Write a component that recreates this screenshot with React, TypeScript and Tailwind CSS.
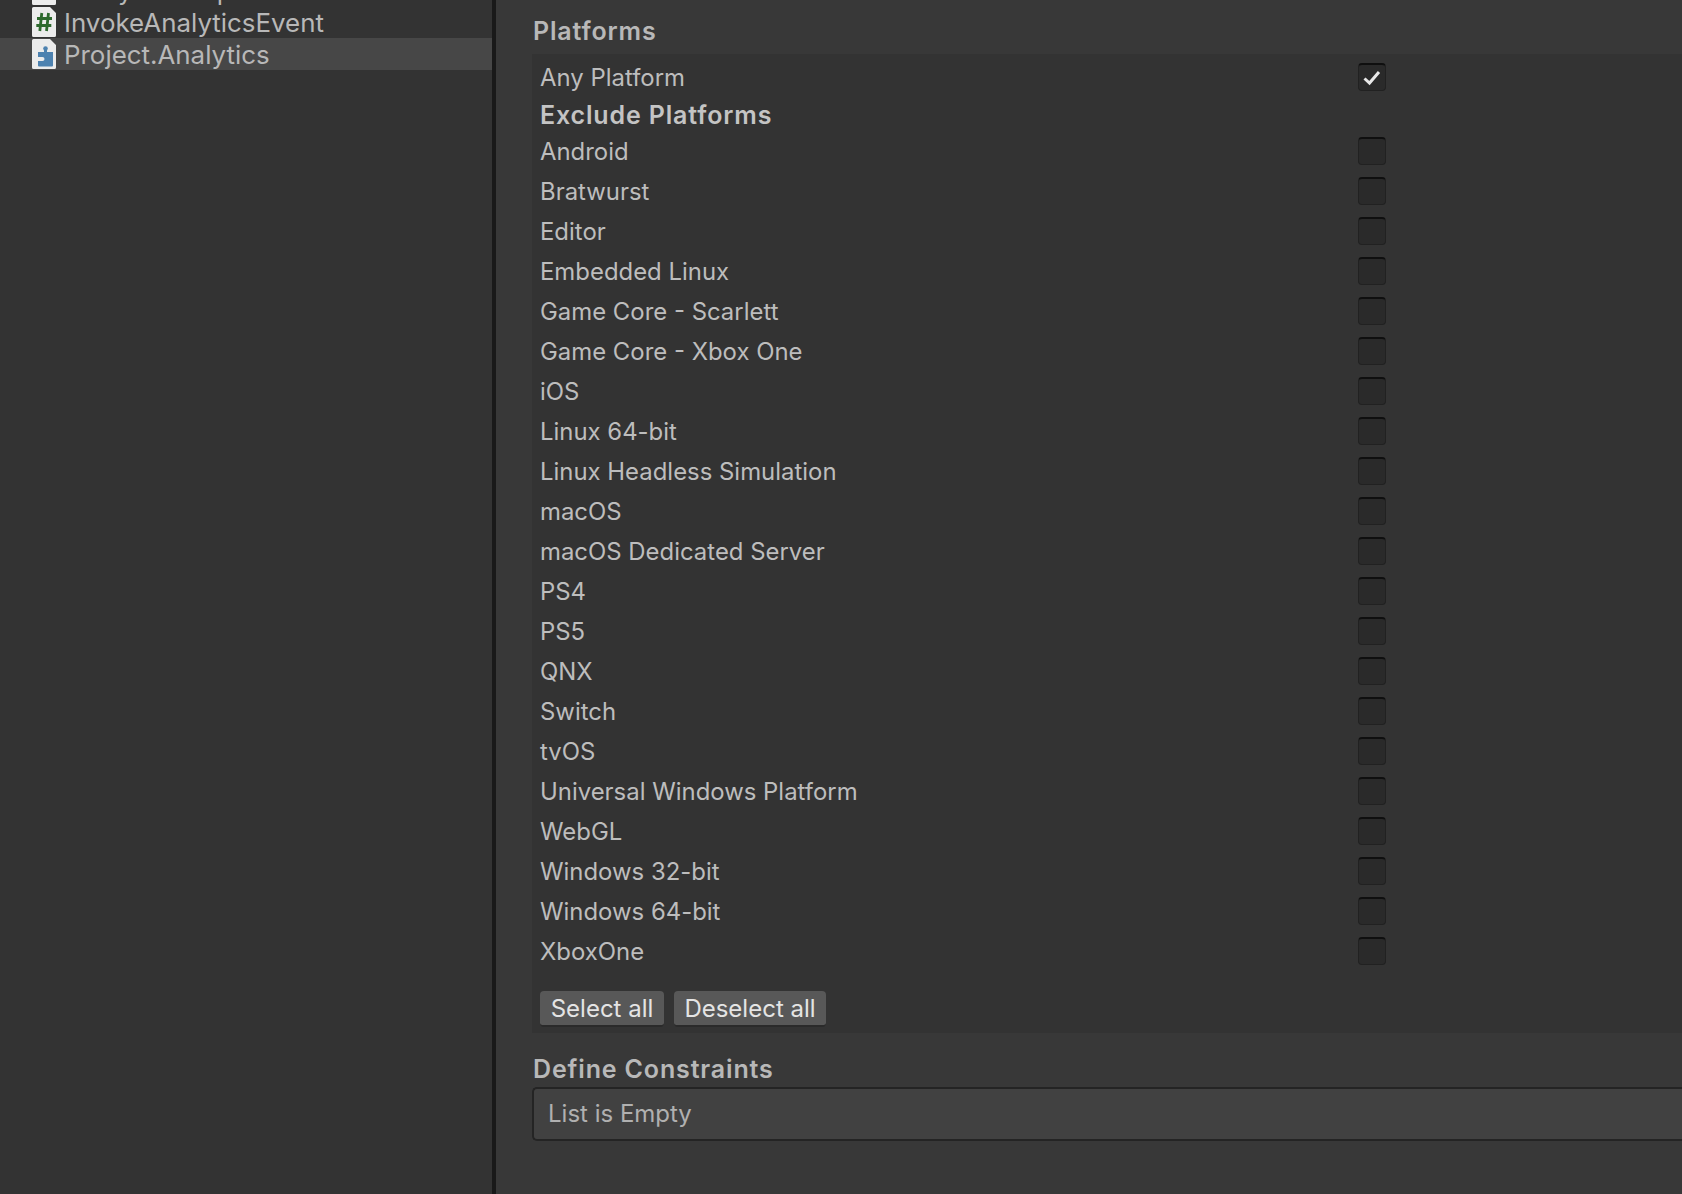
const platforms = [
  "Android","Bratwurst","Editor","Embedded Linux","Game Core - Scarlett","Game Core - Xbox One","iOS","Linux 64-bit","Linux Headless Simulation","macOS","macOS Dedicated Server","PS4","PS5","QNX","Switch","tvOS","Universal Windows Platform","WebGL","Windows 32-bit","Windows 64-bit","XboxOne",
];

function FileIcon({ kind }: { kind: "hash" | "puzzle" }) {
  return (
    <svg width="24" height="30" viewBox="0 0 24 30" className="shrink-0">
      <path d="M1.500 0H18L24 6V28.500A1.500 1.500 0 0 1 22.500 30H1.500A1.500 1.500 0 0 1 0 28.500V1.500A1.500 1.500 0 0 1 1.500 0Z" fill="#ececec" />
      {kind === "hash" ? (
        <g stroke="#2e6a2e" strokeWidth="2.800" fill="none">
          <path d="M9.800 6L7.800 24M16.500 6L14.500 24M5 11.500H20M4.300 18.500H19.300" />
        </g>
      ) : (
        <g>
          <circle cx="13.500" cy="9.500" r="2.300" fill="#4d82b0" />
          <path d="M12 10H15V13H21V26.500A1 1 0 0 1 20 27.500H7A1 1 0 0 1 6 26.500V22H10.500A2 2 0 0 0 10.500 18H6V13H12Z" fill="#4d82b0" />
        </g>
      )}
    </svg>
  );
}

function Check({ on }: { on?: boolean }) {
  return (
    <div className="w-[28px] h-[28px] rounded-[4px] bg-[#2a2a2a] border border-[#212121] border-t-2 border-t-[#0f0f0f] flex items-center justify-center">
      {on && (
        <svg width="18" height="16" viewBox="0 0 18 16">
          <path d="M1.500 8.500L6.500 13L16 2" stroke="#e8e8e8" strokeWidth="3" fill="none" />
        </svg>
      )}
    </div>
  );
}

function Row({ label, on }: { label: string; on?: boolean }) {
  return (
    <div className="h-[40px] flex items-center">
      <span className="w-[818px] shrink-0 whitespace-nowrap pt-[2px] text-[23.92px]">{label}</span>
      <Check on={on} />
    </div>
  );
}

function TreeRow({ label, kind, active }: { label: string; kind: "hash" | "puzzle"; active?: boolean }) {
  return (
    <div className={`h-[32px] flex items-center gap-[8px] pl-[32px] text-[25.9px] text-[#b8b8b8] ${active ? "bg-[#474747]" : ""}`}>
      <FileIcon kind={kind} />
      <span className="whitespace-nowrap pt-[1px]">{label}</span>
    </div>
  );
}

export default function App() {
  return (
    <div className="w-[1682px] h-[1194px] overflow-hidden flex bg-[#383838] text-[#bdbdbd] text-[24px] leading-[32px] [font-family:Inter,'Liberation_Sans',sans-serif]">
      <aside className="w-[492px] shrink-0 bg-[#333333] -mt-[26px] h-[1220px]">
        <TreeRow label="AnalyticsHelper" kind="hash" />
        <TreeRow label="InvokeAnalyticsEvent" kind="hash" />
        <TreeRow label="Project.Analytics" kind="puzzle" active />
      </aside>
      <div className="w-[4px] shrink-0 bg-[#191919]" />
      <main className="flex-1 min-w-0 pl-[36px]">
        <h2 className="h-[54px] pt-[15px] pl-[1px] text-[25px] font-semibold tracking-[0.85px] text-[#b8b8b8]">Platforms</h2>
        <section className="bg-[#333333] h-[979px] px-[8px] pt-[3px] flex flex-col">
          <Row label="Any Platform" on />
          <div className="h-[34px] pt-[1px] flex items-center text-[25px] font-semibold tracking-[0.85px] text-[#c4c4c4]">Exclude Platforms</div>
          {platforms.map((p) => (
            <Row key={p} label={p} />
          ))}
          <div className="flex gap-[10px] mt-[20px]">
            <button className="w-[124px] h-[36px] pt-[2px] rounded-[4px] bg-[#585858] border-b-2 border-[#2a2a2a] text-[#e4e4e4]">Select all</button>
            <button className="w-[152px] h-[36px] pt-[2px] rounded-[4px] bg-[#585858] border-b-2 border-[#2a2a2a] text-[#e4e4e4]">Deselect all</button>
          </div>
        </section>
        <h2 className="h-[54px] pt-[20px] pl-[1px] text-[25px] font-semibold tracking-[0.85px] text-[#b8b8b8]">Define Constraints</h2>
        <div className="h-[54px] rounded-l-[5px] border-2 border-r-0 border-[#242424] bg-[#414141] pl-[14px] flex items-center text-[#b0b0b0]">List is Empty</div>
      </main>
    </div>
  );
}
